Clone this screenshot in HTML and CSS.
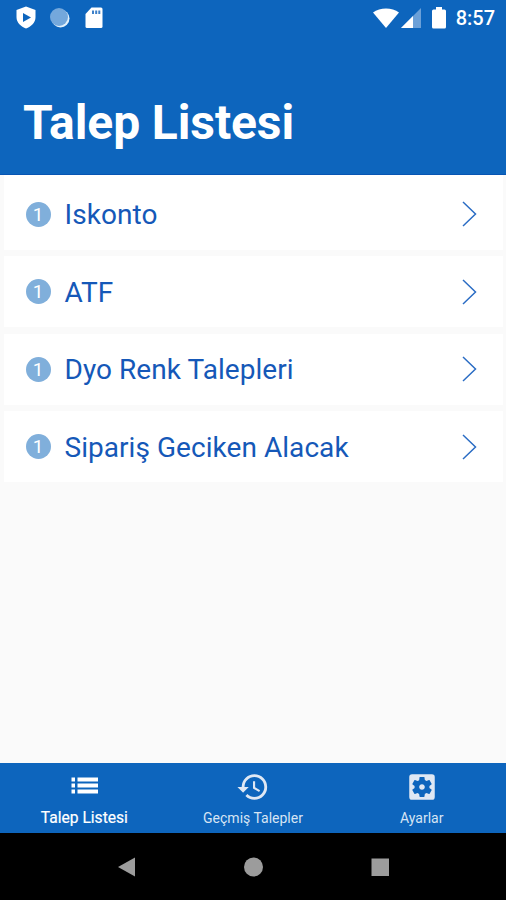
FILE: index.html
```html
<!DOCTYPE html>
<html lang="tr">

<head>
    <meta charset="UTF-8">
    <meta name="viewport" content="width=device-width, initial-scale=1.0">
    <title>Talep Listesi</title>
    <link rel="stylesheet" href="styles.css">
</head>

<body>
    <div class="app">
        <header class="header">
            <div class="status-bar">
                <svg class="icon-shield" width="20" height="24" viewBox="0 0 20 24">
                    <path d="M10 0.500 19.500 4V11C19.500 17 15 20.500 10 22.500 5 20.500 0.500 17 0.500 11V4Z" fill="#fff"/>
                    <path d="M7 7v9l8-4.500z" fill="#0d65bd"/>
                </svg>
                <svg class="icon-sync" width="22" height="22" viewBox="0 0 22 22">
                    <circle cx="11.500" cy="11.500" r="9" fill="#e3f1fb"/>
                    <circle cx="10" cy="10" r="9" fill="#74a8dc"/>
                </svg>
                <svg class="icon-card" width="18" height="22" viewBox="0 0 18 22">
                    <path d="M6.500 0.500H16A1.500 1.500 0 0 1 17.500 2v17.500A1.500 1.500 0 0 1 16 21H2a1.500 1.500 0 0 1-1.500-1.500V7z" fill="#fff"/>
                    <path d="M7 3.500h2v3.500H7zM10.200 3.500h2v3.500h-2zM13.300 3.500h2v3.500h-2z" fill="#3d80c9"/>
                </svg>
                <span class="spacer"></span>
                <svg class="icon-wifi" width="26" height="20" viewBox="0 0 26 20">
                    <path d="M0 4.500C7-1 19-1 26 4.500L13 20z" fill="#fff"/>
                </svg>
                <svg class="icon-signal" width="20" height="20" viewBox="0 0 20 20">
                    <path d="M0 20 20 0V20z" fill="#6ba0d8"/>
                    <path d="M0 20 12 8V20z" fill="#fff"/>
                </svg>
                <svg class="icon-battery" width="14" height="22" viewBox="0 0 14 22">
                    <path d="M4 0h6v2.500h2.500Q14 2.500 14 4v16Q14 21.500 12.500 21.500h-11Q0 21.500 0 20V4Q0 2.500 1.500 2.500H4z" fill="#fff"/>
                </svg>
                <span class="clock">8:57</span>
            </div>
            <h1 class="title">Talep Listesi</h1>
        </header>

        <main class="list">
            <a class="item">
                <span class="badge">1</span>
                <span class="label">Iskonto</span>
                <svg class="chevron" width="16" height="26" viewBox="0 0 16 26"><path d="M1 1 13.500 13 1 25"/></svg>
            </a>
            <a class="item">
                <span class="badge">1</span>
                <span class="label">ATF</span>
                <svg class="chevron" width="16" height="26" viewBox="0 0 16 26"><path d="M1 1 13.500 13 1 25"/></svg>
            </a>
            <a class="item">
                <span class="badge">1</span>
                <span class="label">Dyo Renk Talepleri</span>
                <svg class="chevron" width="16" height="26" viewBox="0 0 16 26"><path d="M1 1 13.500 13 1 25"/></svg>
            </a>
            <a class="item">
                <span class="badge">1</span>
                <span class="label">Sipariş Geciken Alacak</span>
                <svg class="chevron" width="16" height="26" viewBox="0 0 16 26"><path d="M1 1 13.500 13 1 25"/></svg>
            </a>
        </main>

        <nav class="tabs">
            <a class="tab active">
                <svg width="34" height="34" viewBox="0 0 34 34">
                    <path d="M4.500 7.500h3.500v4H4.500zM4.500 13.500h3.500v4H4.500zM4.500 19.500h3.500v4H4.500zM10.500 7.500H31v4H10.500zM10.500 13.500H31v4H10.500zM10.500 19.500H31v4H10.500z"/>
                </svg>
                <span>Talep Listesi</span>
            </a>
            <a class="tab">
                <svg width="34" height="34" viewBox="0 0 24 24">
                    <path d="M13 3a9 9 0 0 0-9 9H1l3.890 3.890.070.140L9 12H6c0-3.870 3.130-7 7-7s7 3.130 7 7-3.130 7-7 7c-1.930 0-3.680-.790-4.940-2.060l-1.420 1.420A8.954 8.954 0 0 0 13 21a9 9 0 0 0 0-18zm-1 5v5l4.280 2.540.720-1.210-3.500-2.080V8H12z"/>
                </svg>
                <span>Geçmiş Talepler</span>
            </a>
            <a class="tab">
                <svg width="34" height="34" viewBox="0 0 24 24">
                    <path d="M12 10c-1.100 0-2 .900-2 2s.900 2 2 2 2-.900 2-2-.900-2-2-2zm7-7H5a2 2 0 0 0-2 2v14a2 2 0 0 0 2 2h14a2 2 0 0 0 2-2V5a2 2 0 0 0-2-2zm-1.750 9c0 .230-.020.460-.050.680l1.480 1.160c.130.110.170.300.080.450l-1.400 2.420c-.090.150-.270.210-.430.150l-1.740-.700c-.360.280-.750.510-1.180.690l-.260 1.850c-.030.170-.180.300-.350.300h-2.800c-.170 0-.320-.130-.350-.290l-.260-1.850c-.430-.180-.820-.410-1.180-.690l-1.740.700c-.160.060-.340 0-.430-.150l-1.400-2.420c-.090-.150-.050-.340.080-.450l1.480-1.160c-.030-.230-.050-.460-.050-.690s.020-.460.050-.680l-1.480-1.160c-.130-.110-.170-.300-.080-.450l1.400-2.420c.090-.150.270-.210.430-.150l1.740.700c.360-.280.750-.510 1.180-.690l.260-1.850c.030-.170.180-.300.350-.300h2.800c.170 0 .320.130.350.290l.260 1.850c.430.180.820.410 1.180.690l1.740-.700c.160-.060.340 0 .430.150l1.400 2.420c.090.150.050.340-.080.450l-1.480 1.160c.030.230.050.460.050.690z"/>
                </svg>
                <span>Ayarlar</span>
            </a>
        </nav>

        <div class="system-bar">
            <svg width="20" height="20" viewBox="0 0 20 20"><path d="M1 10 18 0.500V19.500z"/></svg>
            <svg width="20" height="20" viewBox="0 0 20 20"><circle cx="10.500" cy="10" r="9.500"/></svg>
            <svg width="20" height="20" viewBox="0 0 20 20"><path d="M1.500 1.500H19V19H1.500z"/></svg>
        </div>
    </div>
</body>

</html>
```
FILE: styles.css
```css
* {
    box-sizing: border-box;
}

body {
    margin: 0;
    font-family: Roboto, "Liberation Sans", sans-serif;
}

.app {
    display: flex;
    flex-direction: column;
    height: 900px;
    background-color: #fafafa;
}

.header {
    height: 175px;
    background-color: #0d65bd;
    border-bottom: 1px solid #0755b3;
    color: #fff;
}

.status-bar {
    display: flex;
    align-items: center;
    height: 35px;
    padding: 0 11px 0 16px;
}

.spacer {
    flex: 1;
}

.icon-sync {
    margin-left: 13px;
}

.icon-card {
    margin-left: 14px;
}

.icon-signal {
    margin-left: 2px;
}

.icon-battery {
    margin: 0 10px 0 11px;
}

.clock {
    font-size: 20px;
    font-weight: 500;
    line-height: 36px;
}

.title {
    margin: 58px 0 0 23px;
    font-size: 48px;
    font-weight: 700;
    letter-spacing: -0.1px;
    line-height: 60px;
}

.list {
    display: flex;
    flex: 1;
    flex-direction: column;
    gap: 6.5px;
    padding: 0 3px 0 4px;
}

.item {
    display: flex;
    align-items: center;
    height: 71px;
    padding: 0 25px 0 21px;
    background-color: #fff;
}

.item:first-child {
    height: 74.5px;
    padding-top: 4px;
}

.badge {
    width: 25px;
    height: 25px;
    margin-left: 0.5px;
    border-radius: 50%;
    background-color: #80afdb;
    color: #fff;
    font-size: 19px;
    line-height: 26px;
    text-align: center;
}

.label {
    flex: 1;
    margin: 2px 0 0 14px;
    color: #1558b8;
    font-size: 28px;
    letter-spacing: 0.05px;
    line-height: 34px;
}

.chevron path {
    fill: none;
    stroke: #2a6cc4;
    stroke-width: 1.5;
}

.tabs {
    display: flex;
    height: 70px;
    background-color: #0d65bd;
}

.tab {
    display: flex;
    flex: 1;
    flex-direction: column;
    align-items: center;
    padding-top: 7px;
    color: #d6e4f4;
    font-size: 14px;
    line-height: 20px;
}

.tab svg {
    fill: #dfe8f4;
}

.tab span {
    margin-top: 4px;
}

.tab.active {
    color: #fff;
    font-size: 15.6px;
    -webkit-text-stroke: 0.2px #fff;
}

.tab.active svg {
    fill: #fff;
}

.system-bar {
    display: flex;
    align-items: center;
    justify-content: center;
    gap: 106.5px;
    height: 67px;
    background-color: #000;
}

.system-bar svg {
    fill: #9c9c9c;
}
```
